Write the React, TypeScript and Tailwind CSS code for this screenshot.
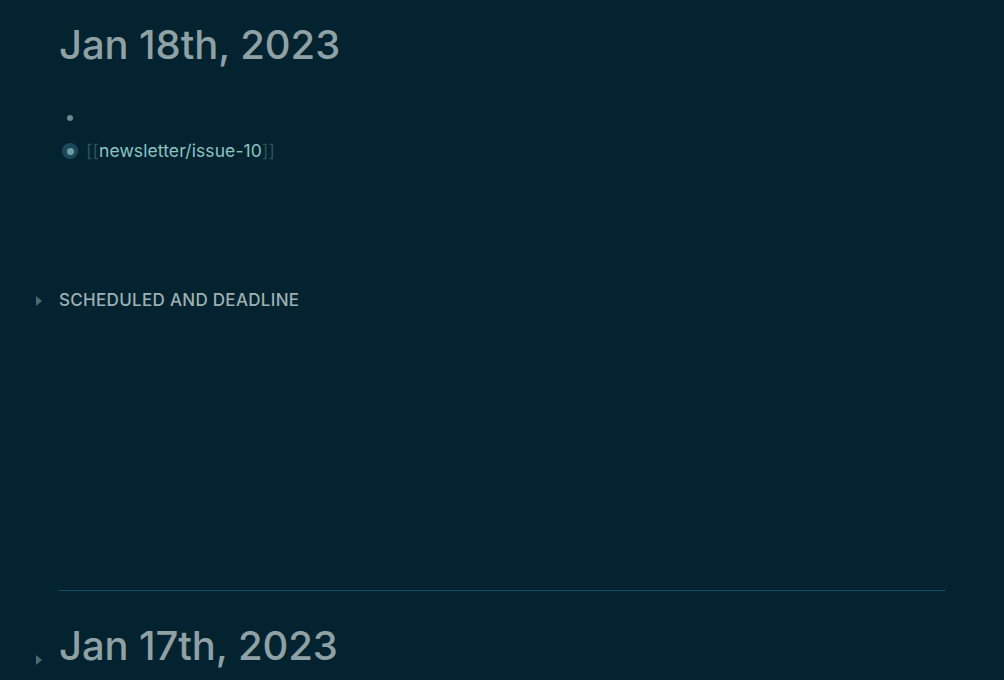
import React from "react";

function Caret({ className }: { className?: string }) {
  return (
    <svg width="6" height="10" viewBox="0 0 6 10" className={className}>
      <path d="M0 0 L6 5 L0 10 Z" fill="#4a6b72" />
    </svg>
  );
}

export default function App() {
  return (
    <div
      className="w-[1004px] h-[680px] overflow-hidden bg-[#02232f] text-[#8fa1a4]"
      style={{ fontFamily: "Inter, 'Noto Sans', sans-serif" }}
    >
      <div className="pl-[59px] pr-[58px]">
        {/* Jan 18th */}
        <h1 className="pt-[21px] text-[40px] leading-[48px] font-medium tracking-[-0.1px] text-[#8fa1a4]">
          Jan 18th, 2023
        </h1>

        <div className="mt-[40px] flex flex-col">
          <div className="flex items-center h-[18px]">
            <div className="w-[22px] flex justify-center">
              <span className="w-[6px] h-[6px] rounded-full bg-[#6a8a90]" />
            </div>
          </div>
          <div className="flex items-center h-[20px] mt-[14px]">
            <div className="w-[22px] flex justify-center">
              <span className="w-[16px] h-[16px] rounded-full bg-[#1a4a59] flex items-center justify-center">
                <span className="w-[7px] h-[7px] rounded-full bg-[#6f9fa5]" />
              </span>
            </div>
            <div className="ml-[5px] text-[17.5px] leading-[20px] tracking-[0.1px]">
              <span className="text-[#2e535d]">[[</span>
              <span className="text-[#8cc3c3]">newsletter/issue-10</span>
              <span className="text-[#2e535d]">]]</span>
            </div>
          </div>
        </div>

        {/* Scheduled */}
        <div className="relative mt-[130px] flex items-center h-[20px]">
          <Caret className="absolute left-[-23px] top-[5px]" />
          <span className="text-[17px] font-medium text-[#9fb0b3] tracking-[0.3px]">
            SCHEDULED AND DEADLINE
          </span>
        </div>

        <div className="mt-[279px] h-px bg-[#0c4d61]" />

        {/* Jan 17th */}
        <div className="relative mt-[31px]">
          <Caret className="absolute left-[-23px] top-[33px]" />
          <h1 className="text-[40px] leading-[48px] font-medium tracking-[-0.1px] text-[#8fa1a4]">
            Jan 17th, 2023
          </h1>
        </div>
      </div>
    </div>
  );
}
